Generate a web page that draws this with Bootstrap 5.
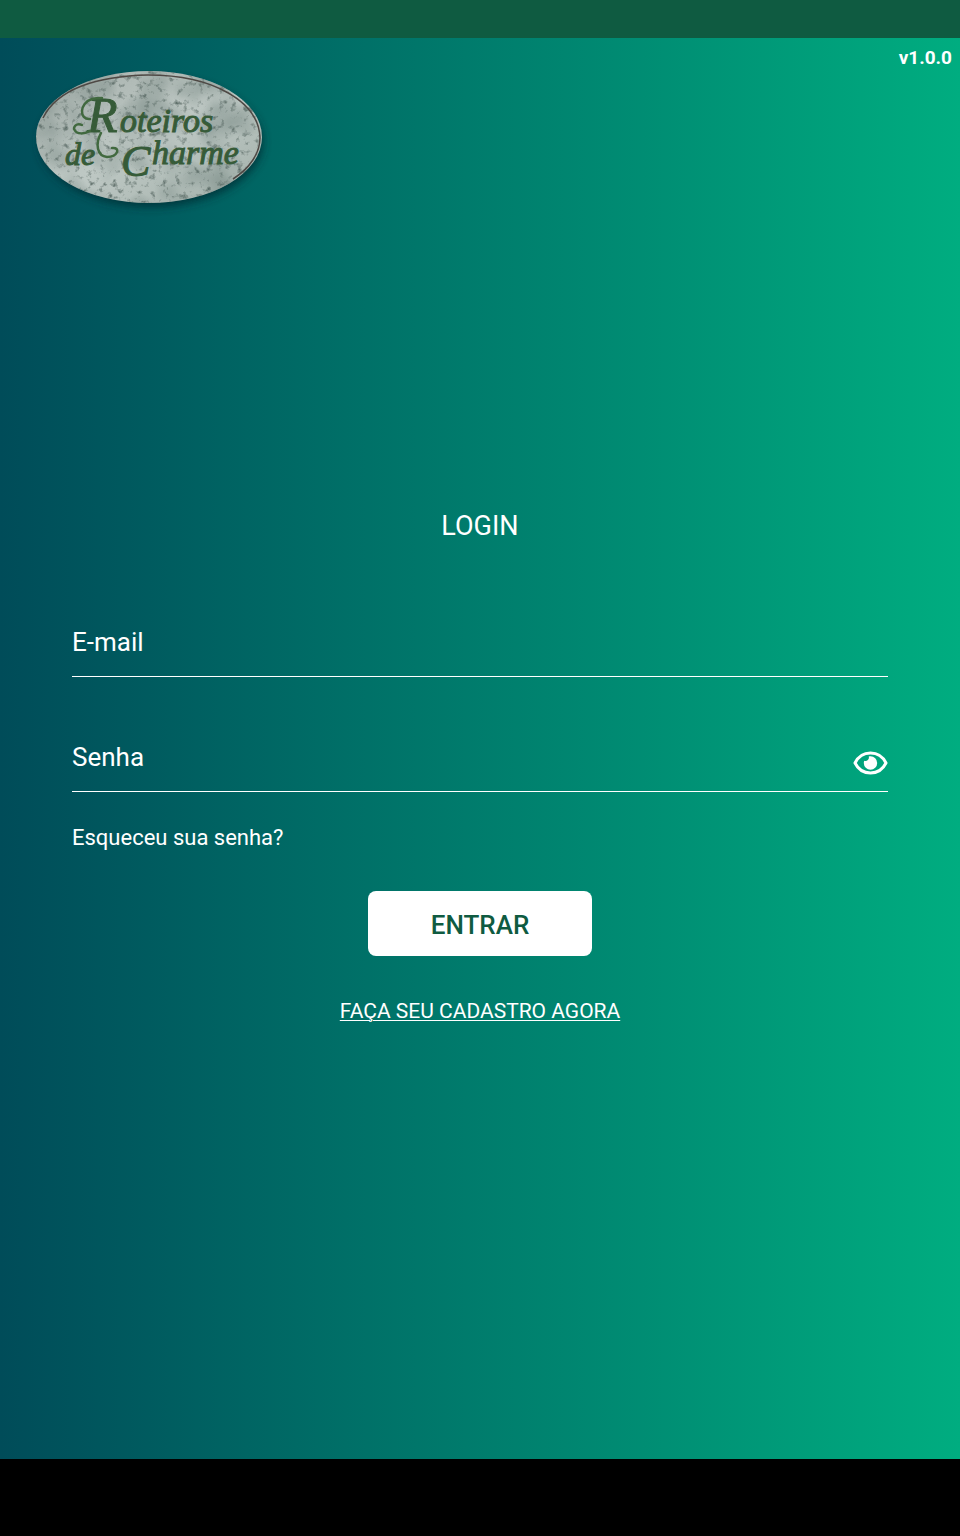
<!DOCTYPE html>
<html lang="pt-BR">
<head>
<meta charset="utf-8">
<meta name="viewport" content="width=device-width, initial-scale=1">
<title>Roteiros de Charme</title>
<link href="https://cdn.jsdelivr.net/npm/bootstrap@5.3.0/dist/css/bootstrap.min.css" rel="stylesheet">
<style>
  body { font-family: Roboto, sans-serif; background: #000; color: #fff; }
  .status-strip { height: 38px; background: #0f5b41; }
  .system-strip { height: 77px; background: #000; }
  .login-screen { background: linear-gradient(90deg, #004c59, #00ad80); }
  .version-tag { font-size: 19px; line-height: 24px; }
  .brand-logo { width: 260px; height: 160px; margin: 0 20px; }
  .brand-logo text { font-family: "Liberation Serif", serif; font-style: italic; }
  .login-form { padding: 280px 72px 0; }
  .login-title { font-size: 27px; line-height: 32px; margin-bottom: 74px; }
  .line-field { border-bottom: 1px solid #fff; height: 61px; }
  .line-field + .line-field { margin-top: 54px; }
  .line-field label, .line-field .form-control { height: 52px; font-size: 26px; line-height: 52px; color: #fff; }
  .eye-icon { width: 36px; height: 26px; }
  .forgot-link { font-size: 22px; line-height: 30px; margin-top: 31px; }
  .btn-enter { width: 224px; height: 65px; margin-top: 38px; padding: 4px 0 0; font-size: 26px; font-weight: 500; border: 0; border-radius: 8px; background: #fff; color: #0f5b41; }
  .signup-link { font-size: 21px; line-height: 30px; margin-top: 40px; text-underline-offset: 2px; text-decoration-thickness: 1px; }
</style>
</head>
<body class="d-flex flex-column min-vh-100">
  <div class="status-strip"></div>
  <main class="login-screen flex-grow-1">
    <header>
      <div class="version-tag text-end fw-bold pe-2 pt-2">v1.0.0</div>
      <svg class="brand-logo d-block" viewBox="20 70 260 160" role="img" aria-label="Roteiros de Charme">
        <defs>
          <filter id="stone" x="0" y="0" width="100%" height="100%" color-interpolation-filters="sRGB">
            <feTurbulence type="fractalNoise" baseFrequency="0.16" numOctaves="4" seed="8"/>
            <feColorMatrix values="0 0 0 0 .25  0 0 0 0 .32  0 0 0 0 .3  2.2 0 0 0 -1.22" result="specks"/>
            <feComposite in="specks" in2="SourceGraphic" operator="in" result="cut"/>
            <feTurbulence type="fractalNoise" baseFrequency="0.03" numOctaves="2" seed="3"/>
            <feColorMatrix values="0 0 0 0 .45  0 0 0 0 .52  0 0 0 0 .5  1.2 0 0 0 -.45" result="clouds"/>
            <feComposite in="clouds" in2="SourceGraphic" operator="in" result="veins"/>
            <feMerge><feMergeNode in="SourceGraphic"/><feMergeNode in="veins"/><feMergeNode in="cut"/></feMerge>
          </filter>
          <filter id="shade" x="-10%" y="-10%" width="120%" height="130%"><feGaussianBlur stdDeviation="4"/></filter>
          <linearGradient id="face" x1="0" y1="0" x2="1" y2="1">
            <stop offset="0" stop-color="#a4aeaa"/><stop offset=".5" stop-color="#bec8c4"/><stop offset="1" stop-color="#a2b0aa"/>
          </linearGradient>
        </defs>
        <ellipse cx="151" cy="142" rx="112" ry="65" fill="#002b30" opacity=".75" filter="url(#shade)"/>
        <ellipse cx="149" cy="137" rx="113" ry="66" fill="url(#face)" filter="url(#stone)"/>
        <path d="M43 118C57 89 97 76 148 75C214 75 259 102 260 138C260 153 250 168 233 179" fill="none" stroke="#4e4844" stroke-width="1.5"/>
        <g fill="#365b38" stroke="#365b38" stroke-width="1">
          <text x="87" y="132" font-size="50">R</text>
          <text x="120" y="132" font-size="34">oteiros</text>
          <text x="65" y="165" font-size="32">de</text>
          <text x="121" y="176" font-size="44">C</text>
          <text x="152" y="164" font-size="34">harme</text>
        </g>
        <g fill="none" stroke="#41693f" stroke-width="2.5" stroke-linecap="round">
          <path d="M90 119C79 120 79 103 92 99C96 98 99 98 102 98"/>
          <path d="M90 131C84 134 77 135 74 129C74 125 78 123 82 125"/>
          <path d="M101 133C95 144 97 156 107 157C118 157 121 147 112 148"/>
        </g>
      </svg>
    </header>
    <form class="login-form" onsubmit="return false">
      <h1 class="login-title text-center fw-normal">LOGIN</h1>
      <div class="line-field d-flex gap-2">
        <label class="text-nowrap" for="email">E-mail</label>
        <input class="form-control bg-transparent border-0 rounded-0 shadow-none p-0" type="email" id="email">
      </div>
      <div class="line-field d-flex gap-2">
        <label class="text-nowrap" for="senha">Senha</label>
        <input class="form-control bg-transparent border-0 rounded-0 shadow-none p-0" type="password" id="senha">
        <button class="btn border-0 p-0 pt-1 text-white" type="button" aria-label="Mostrar senha">
          <svg class="eye-icon d-block" viewBox="0 0 36 26" fill="none">
            <path d="M3 13C6.500 6 12 3 18.500 3S30.500 6 34 13C30.500 20 25 23 18.500 23S6.500 20 3 13Z" stroke="currentColor" stroke-width="3" stroke-linejoin="round"/>
            <path d="M18.500 6.300A6.700 6.700 0 1 1 11.800 13C11.800 12.200 12 11.400 12.300 10.700A3.300 3.300 0 0 0 16.700 6.600C17.300 6.400 17.900 6.300 18.500 6.300Z" fill="currentColor"/>
          </svg>
        </button>
      </div>
      <div class="d-flex"><a class="forgot-link text-white text-decoration-none" href="#">Esqueceu sua senha?</a></div>
      <div class="d-flex flex-column align-items-center">
        <button class="btn btn-enter" type="submit">ENTRAR</button>
        <a class="signup-link text-white" href="#">FAÇA SEU CADASTRO AGORA</a>
      </div>
    </form>
  </main>
  <div class="system-strip"></div>
  <script src="https://cdn.jsdelivr.net/npm/bootstrap@5.3.0/dist/js/bootstrap.bundle.min.js"></script>
</body>
</html>
